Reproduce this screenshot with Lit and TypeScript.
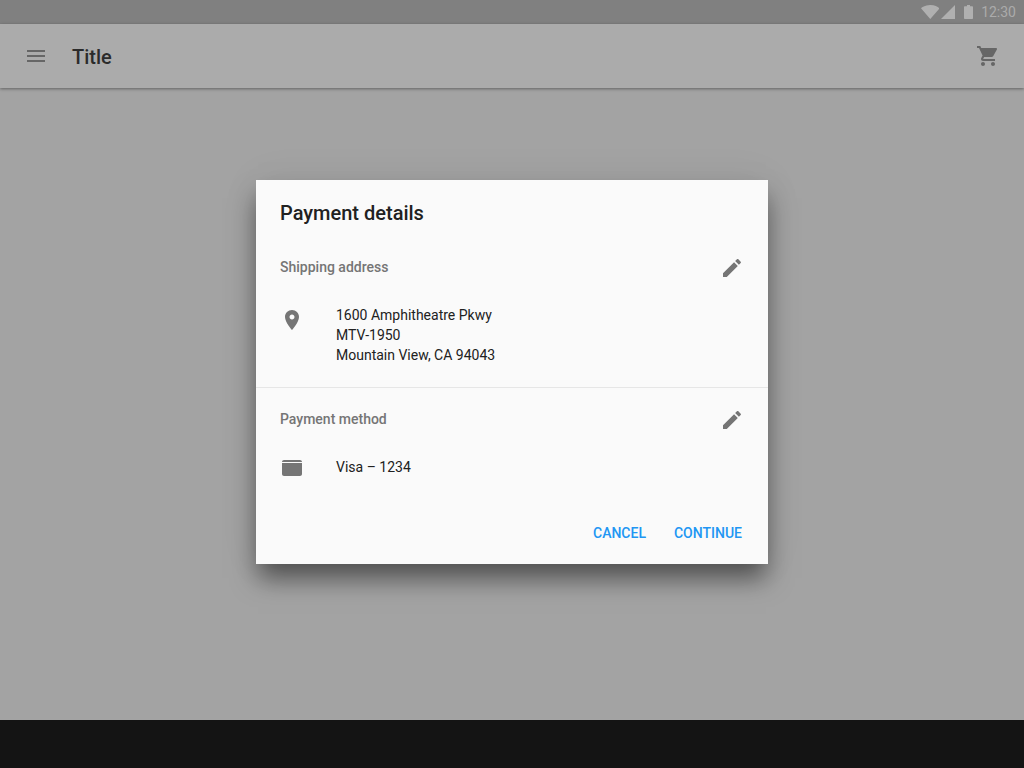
import { LitElement, html, css, svg } from "lit";
import { customElement } from "lit/decorators.js";

const icon = (d: unknown, cls = "icon", vb = "0 0 24 24") =>
  html`<svg class=${cls} viewBox=${vb} aria-hidden="true">${d}</svg>`;

const edit = svg`<path d="M3 17.25V21h3.75L17.81 9.94l-3.75-3.75L3 17.25zM20.71 7.04c.39-.39.39-1.02 0-1.41l-2.34-2.34c-.39-.39-1.02-.39-1.41 0l-1.83 1.83 3.75 3.75 1.83-1.83z"/>`;
const menu = svg`<path d="M3 18h18v-2H3v2zm0-5h18v-2H3v2zm0-7v2h18V6H3z"/>`;
const cart = svg`<path d="M7 18c-1.1 0-1.99.9-1.99 2S5.9 22 7 22s2-.9 2-2-.9-2-2-2zM1 2v2h2l3.6 7.59-1.35 2.45c-.16.28-.25.61-.25.96 0 1.1.9 2 2 2h12v-2H7.42c-.14 0-.25-.11-.25-.25l.03-.12.9-1.63h7.45c.75 0 1.41-.41 1.75-1.03l3.58-6.49c.08-.14.12-.31.12-.48 0-.55-.45-1-1-1H5.21l-.94-2H1zm16 16c-1.1 0-1.99.9-1.99 2s.89 2 1.99 2 2-.9 2-2-.9-2-2-2z"/>`;
const place = svg`<path d="M12 2C8.13 2 5 5.13 5 9c0 5.25 7 13 7 13s7-7.75 7-13c0-3.87-3.13-7-7-7zm0 9.5c-1.38 0-2.5-1.12-2.5-2.5s1.12-2.5 2.5-2.5 2.5 1.12 2.5 2.5-1.12 2.5-2.5 2.5z"/>`;
const card = svg`<path d="M4 4h16c1.1 0 2 .9 2 2H2c0-1.1.9-2 2-2zM2 7h20v11c0 1.1-.9 2-2 2H4c-1.1 0-2-.9-2-2z"/>`;
const wifi = svg`<path d="M9.25 14 18.5 3.3C18 2.9 14.6 0 9.25 0S.5 2.9 0 3.3z"/>`;
const signal = svg`<path d="M0 14h14V0z"/>`;
const battery = svg`<path d="M3 1.2V0h3v1.2h2c.55 0 1 .45 1 1V13c0 .55-.45 1-1 1H1c-.55 0-1-.45-1-1V2.200c0-.55.45-1 1-1z"/>`;

@customElement("app-root")
export class AppRoot extends LitElement {
  static styles = css`
    :host {
      display: flex;
      flex-direction: column;
      position: relative;
      width: 1024px;
      height: 768px;
      overflow: hidden;
      background: #a3a3a3;
      font-family: Roboto, "Liberation Sans", sans-serif;
    }
    .status {
      height: 24px;
      flex: none;
      background: #808080;
      display: flex;
      align-items: center;
      justify-content: flex-end;
      padding-right: 8px;
      color: #ababab;
      font-size: 14px;
    }
    .status svg { fill: #b0b0b0; height: 14px; display: block; }
    .s-wifi { width: 18.5px; margin-right: 2px; }
    .s-signal { width: 14px; margin-right: 9px; }
    .s-battery { width: 9px; margin-right: 8px; }
    .appbar {
      height: 64px;
      flex: none;
      background: #ababab;
      box-shadow: 0 1px 3px rgba(0, 0, 0, 0.4);
      display: flex;
      align-items: center;
      padding: 0 24px;
      position: relative;
    }
    .appbar .title {
      margin-left: 24px;
      padding-top: 2px;
      flex: 1;
      font-size: 20px;
      font-weight: 500;
      color: #2b2b2b;
    }
    .icon { width: 24px; height: 24px; fill: #666; display: block; flex: none; }
    .body { flex: 1; }
    .nav { height: 48px; flex: none; background: #141414; }
    .overlay {
      position: absolute;
      top: 24px;
      left: 0;
      right: 0;
      bottom: 48px;
      display: flex;
      align-items: center;
      justify-content: center;
    }
    .dialog {
      width: 512px;
      height: 384px;
      box-sizing: border-box;
      background: #fafafa;
      box-shadow: 0 16px 24px -2px rgba(0, 0, 0, 0.5), 0 0 40px rgba(0, 0, 0, 0.06);
      display: flex;
      flex-direction: column;
    }
    .d-title {
      height: 63px;
      padding: 19px 24px 0;
      box-sizing: border-box;
      line-height: 28px;
      font-size: 20px;
      font-weight: 500;
      color: #212121;
    }
    .sec-head {
      height: 48px;
      padding: 0 24px;
      display: flex;
      align-items: center;
      justify-content: space-between;
      font-size: 14px;
      font-weight: 500;
      color: #757575;
    }
    .sec-head .icon { fill: #757575; margin-top: 2px; }
    .pay-head { margin-top: 7px; }
    .item {
      display: flex;
      padding: 0 24px;
      font-size: 14px;
      line-height: 20px;
      color: #212121;
    }
    .item .icon { fill: #757575; margin-right: 32px; }
    .addr { padding-top: 14px; padding-bottom: 22px; border-bottom: 1px solid #e6e6e6; }
    .addr .icon { margin-top: 3px; }
    .pay { padding-top: 14px; }
    .pay .icon { margin-top: -1px; }
    .actions {
      margin-top: auto;
      display: flex;
      justify-content: flex-end;
      gap: 28px;
      padding: 0 26px 22px;
      font-size: 14px;
      font-weight: 500;
      line-height: 18px;
      color: #2196f3;
    }
  `;

  render() {
    return html`
      <div class="status">
        ${icon(wifi, "s-wifi", "0 0 18.5 14")}${icon(signal, "s-signal", "0 0 14 14")}${icon(battery, "s-battery", "0 0 9 14")}
        <span>12:30</span>
      </div>
      <header class="appbar">
        ${icon(menu)}
        <span class="title">Title</span>
        ${icon(cart)}
      </header>
      <div class="body"></div>
      <div class="nav"></div>
      <div class="overlay">
        <section class="dialog">
          <div class="d-title">Payment details</div>
          <div class="sec-head"><span>Shipping address</span>${icon(edit)}</div>
          <div class="item addr">
            ${icon(place)}
            <div>1600 Amphitheatre Pkwy<br />MTV-1950<br />Mountain View, CA 94043</div>
          </div>
          <div class="sec-head pay-head"><span>Payment method</span>${icon(edit)}</div>
          <div class="item pay">${icon(card)}<div>Visa – 1234</div></div>
          <div class="actions"><span>CANCEL</span><span>CONTINUE</span></div>
        </section>
      </div>
    `;
  }
}
